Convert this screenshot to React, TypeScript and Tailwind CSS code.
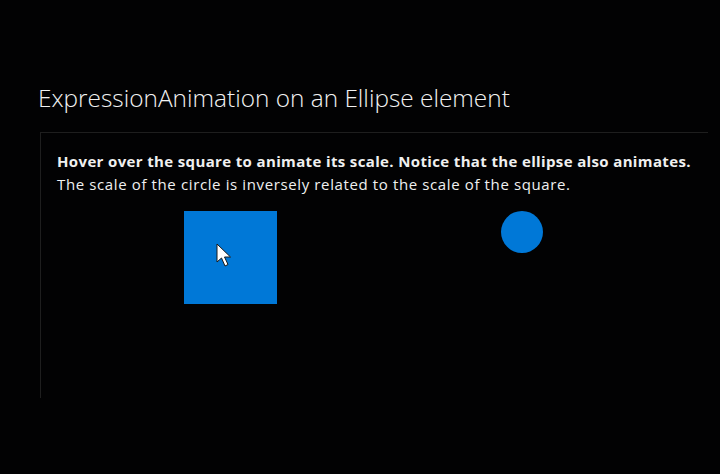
export default function App() {
  return (
    <div
      className="w-[720px] h-[474px] bg-[#020203] text-white overflow-hidden"
      style={{ fontFamily: '"Open Sans", "Noto Sans", sans-serif' }}
    >
      <h1 className="pl-[38px] pt-[82px] text-[24.4px] font-light leading-[32px] text-[#f2f2f2]">
        ExpressionAnimation on an Ellipse element
      </h1>
      <div className="ml-[40px] mt-[18px] w-[668px] h-[266px] border-t border-l border-[#1e1e1e]">
        <div className="pl-[16px] pt-[17px] text-[15px] leading-[23px] text-[#f0f0f0]">
          <p className="font-bold tracking-[0.36px]">
            Hover over the square to animate its scale. Notice that the ellipse also animates.
          </p>
          <p className="tracking-[0.62px]">
            The scale of the circle is inversely related to the scale of the square.
          </p>
        </div>
        <div className="flex items-start pt-[15px]">
          <div className="relative ml-[143px] w-[93px] h-[93px] bg-[#0078d7]">
            <svg
              className="absolute left-[32px] top-[32px]"
              width="17"
              height="25"
              viewBox="0 0 17 25"
            >
              <path
                d="M1 1 L1 19 L5.5 15 L9 23 L12 21.5 L8.5 14 L14.5 14 Z"
                fill="#ffffff"
                stroke="#1a1a1a"
                strokeWidth="1"
                strokeLinejoin="round"
              />
            </svg>
          </div>
          <div className="ml-[224px] w-[42px] h-[42px] rounded-full bg-[#0078d7]" />
        </div>
      </div>
    </div>
  );
}
